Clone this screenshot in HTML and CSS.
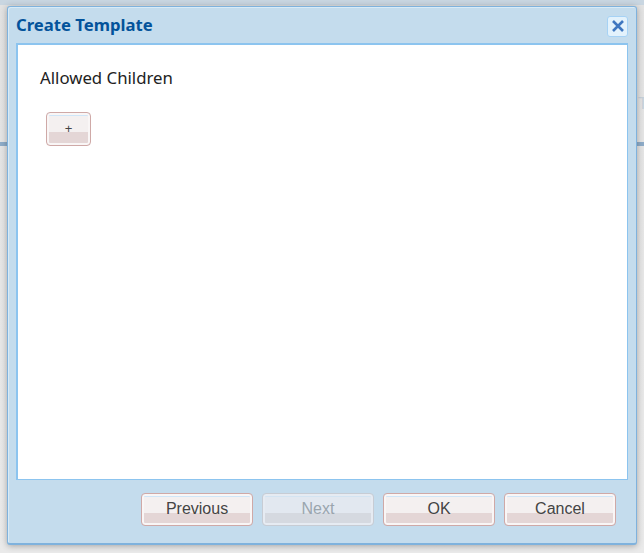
FILE: index.html
```html
<!DOCTYPE html>
<html lang="en">
<head>
    <meta charset="UTF-8">
    <title>Create Template</title>
    <link rel="stylesheet" href="styles.css">
</head>
<body>
    <div class="backdrop">
        <div class="backdrop-top"></div>
        <div class="backdrop-label">T</div>
        <div class="backdrop-line"></div>
    </div>

    <div class="dialog">
        <header class="dialog-title">
            <h1>Create Template</h1>
            <button class="close" aria-label="Close">
                <svg width="14" height="14" viewBox="0 0 14 14">
                    <path d="M2 2 L12 12 M12 2 L2 12" stroke="#3f77c0" stroke-width="2.6" fill="none"/>
                </svg>
            </button>
        </header>

        <main class="dialog-body">
            <h2>Allowed Children</h2>
            <button class="btn btn-add">+</button>
        </main>

        <footer class="dialog-buttons">
            <button class="btn btn-wide">Previous</button>
            <button class="btn btn-wide" disabled>Next</button>
            <button class="btn btn-wide">OK</button>
            <button class="btn btn-wide">Cancel</button>
        </footer>
    </div>
</body>
</html>
```

FILE: styles.css
```css
html, body {
    margin: 0;
    padding: 0;
    height: 553px;
    overflow: hidden;
}
body {
    background: #e6e6e6;
    font-family: "Liberation Sans", Arial, sans-serif;
}
.backdrop {
    height: 553px;
    background: linear-gradient(to bottom, #e2e2e2, #eaeaea);
}
.backdrop-top {
    height: 5px;
    background: #c9d6e1;
}
.backdrop-label {
    padding: 90px 0 0 638px;
    height: 20px;
    font-size: 16px;
    color: #c5d0da;
}
.backdrop-line {
    margin-top: 27px;
    height: 4px;
    background: #8eacc8;
}
.dialog {
    position: absolute;
    left: 7px;
    top: 6px;
    width: 630px;
    height: 539px;
    box-sizing: border-box;
    display: flex;
    flex-direction: column;
    background: #c4dced;
    border: 1px solid #7fb2dd;
    border-bottom-width: 2px;
    border-radius: 3px;
    box-shadow: inset 1px 1px 0 #d8ebf7, 0 1px 6px rgba(0, 0, 0, 0.3);
}
.dialog-title {
    height: 36px;
    flex: none;
    display: flex;
    align-items: center;
    justify-content: space-between;
    padding: 0 8px 0 8px;
}
.dialog-title h1 {
    margin: 0 0 2px;
    font-family: "Noto Sans", sans-serif;
    font-size: 16.7px;
    font-weight: bold;
    color: #03539b;
}
.close {
    width: 21px;
    height: 21px;
    padding: 0;
    margin-top: 2px;
    display: flex;
    align-items: center;
    justify-content: center;
    background: #e3f2fc;
    border: 1px solid #a6d2f5;
    border-radius: 3px;
}
.dialog-body {
    flex: 1;
    margin: 0 8px;
    padding: 0 22px;
    background: #fff;
    border: 2px solid #8cc4ef;
    border-bottom-width: 1px;
    border-right-width: 1px;
}
.dialog-body h2 {
    margin: 22px 0 23px;
    height: 22px;
    line-height: 22px;
    font-family: "Noto Sans", sans-serif;
    font-size: 16.8px;
    font-weight: normal;
    color: #222;
}
.dialog-buttons {
    height: 63px;
    flex: none;
    box-sizing: border-box;
    display: flex;
    justify-content: flex-end;
    gap: 9px;
    padding: 13px 20px 0 0;
}
.btn {
    display: block;
    padding: 0 0 2px;
    box-sizing: border-box;
    font-family: "Liberation Sans", Arial, sans-serif;
    color: #444;
    background: linear-gradient(to bottom, #f4f0f0 0, #f4f0f0 60%, #e4d6d6 60%, #e4d6d6 100%);
    border: 1px solid #cfa9a7;
    border-radius: 4px;
    box-shadow: inset 0 0 0 2px #f9f6f6, inset 0 3px 0 #cfe6f8;
}
.btn-wide {
    width: 112px;
    height: 33px;
    font-size: 16px;
}
.btn-add {
    width: 45px;
    height: 34px;
    margin-left: 6px;
    font-size: 13px;
}
.btn:disabled {
    color: #9aa5ae;
    background: linear-gradient(to bottom, #e2e8f0 0, #e2e8f0 60%, #d5d9e0 60%, #d5d9e0 100%);
    border-color: #c7ccd4;
    box-shadow: inset 0 0 0 2px #e6ebf2, inset 0 3px 0 #d3e4f2;
}
```
